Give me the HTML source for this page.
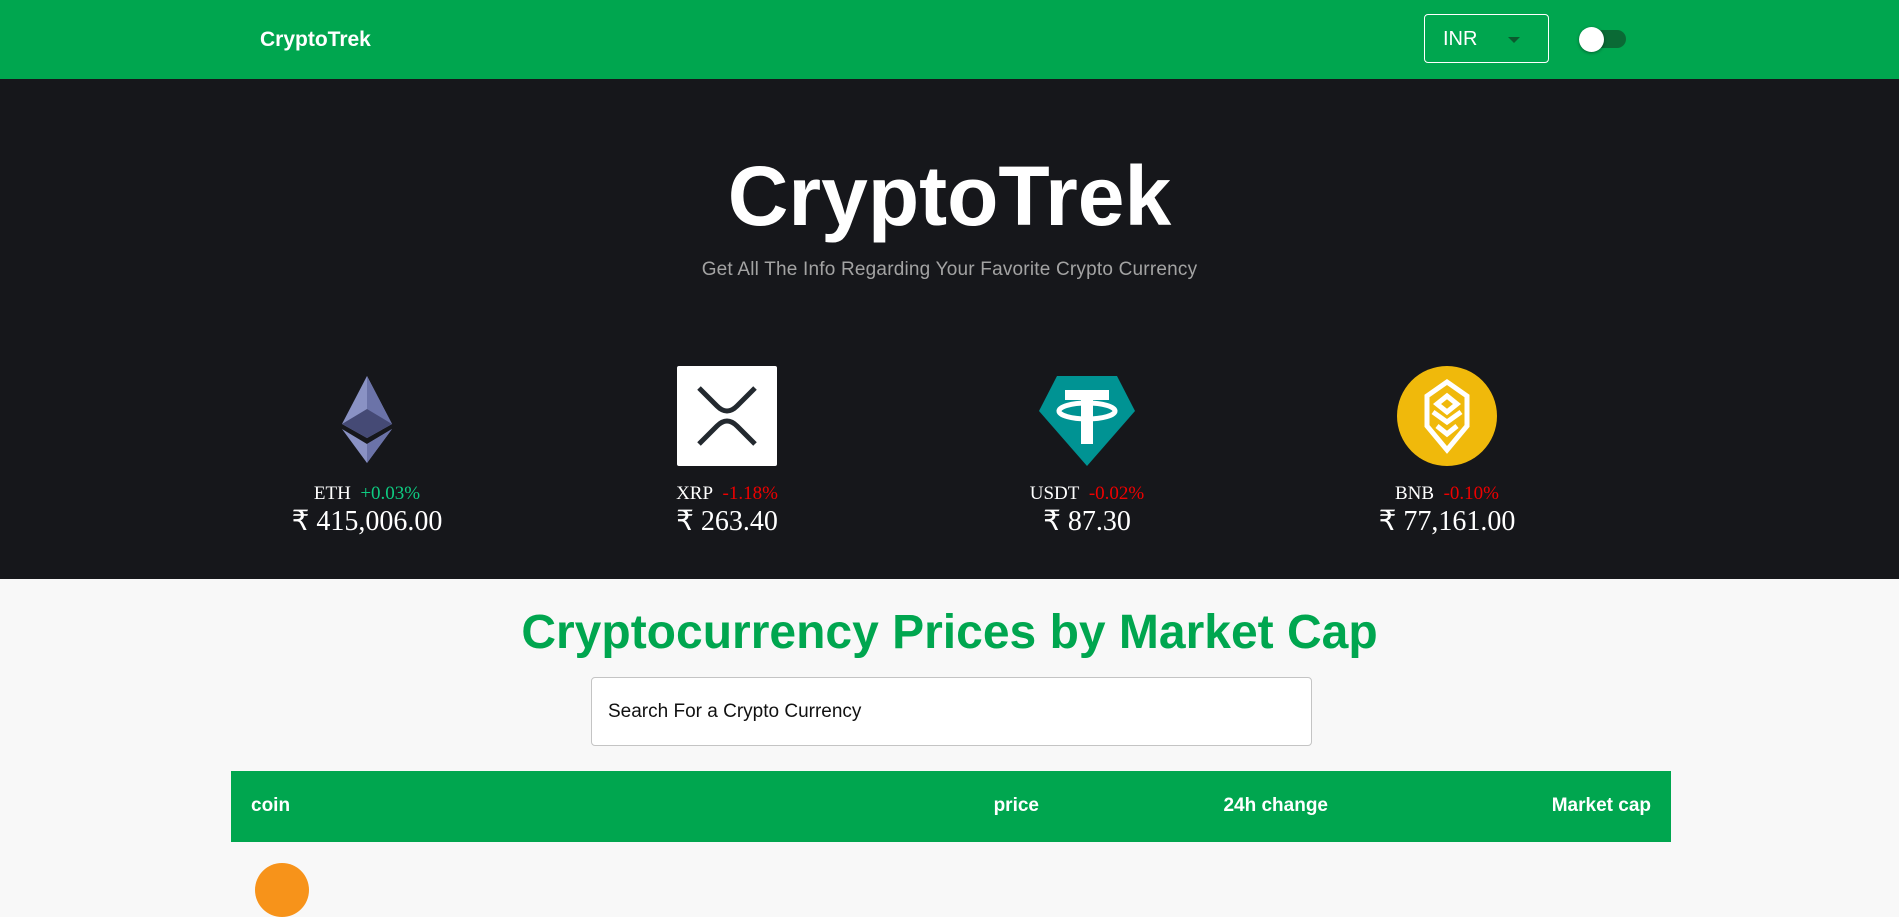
<!DOCTYPE html>
<html><head><meta charset="utf-8"><style>
*{margin:0;padding:0;box-sizing:border-box}
body{width:1899px;height:867px;overflow:hidden;background:#f8f8f8;font-family:"Liberation Sans",sans-serif;position:relative}
.hdr{position:absolute;left:0;top:0;width:1899px;height:79px;background:#00a64f}
.logo{position:absolute;left:260px;top:28px;color:#fff;font-weight:bold;font-size:21px;letter-spacing:0px}
.sel{position:absolute;left:1424px;top:14px;width:125px;height:49px;border:1px solid #fff;border-radius:4px;color:#fff;font-size:20px;padding:13px 0 0 18px}
.sel:after{content:"";position:absolute;right:28px;top:22px;border-left:6px solid transparent;border-right:6px solid transparent;border-top:6px solid #0b5a2e}
.trk{position:absolute;left:1579px;top:30px;width:47px;height:18px;border-radius:9px;background:#0a6a35}
.knob{position:absolute;left:1579px;top:27px;width:25px;height:25px;border-radius:50%;background:#fff;box-shadow:0 1px 3px rgba(0,0,0,.4)}
.dark{position:absolute;left:0;top:79px;width:1899px;height:500px;background:#16171b}
.title{position:absolute;left:0;width:1899px;top:148px;text-align:center;color:#fff;font-weight:bold;font-size:84px;letter-spacing:0px}
.sub{position:absolute;left:0;width:1899px;top:259px;text-align:center;color:#a3a3a3;font-size:19px;letter-spacing:0.2px}
.coin{position:absolute;top:366px;width:300px;text-align:center;color:#fff;font-family:"Liberation Serif",serif}
.ic{width:100px;height:100px;margin:0 auto;display:block}
.sym{margin-top:17px;font-size:19px}
.g{color:#0ecb81}.r{color:#e00}
.pr{font-size:28px;margin-top:-1px}
.h2{position:absolute;left:0;width:1899px;top:605px;text-align:center;color:#00a64f;font-weight:bold;font-size:48px}
.srch{position:absolute;left:591px;top:677px;width:721px;height:69px;border:1px solid #c4c4c4;border-radius:4px;background:#fff;font-size:19px;padding:23px 0 0 16px;color:#111}
.th{position:absolute;left:231px;top:771px;width:1440px;height:71px;background:#00a64f;color:#fff;font-weight:bold;font-size:19px}
.th span{position:absolute;top:24px}
.btc{position:absolute;left:255px;top:863px;width:54px;height:54px;border-radius:50%;background:#f7931a}
</style></head><body>
<div class="hdr"><div class="logo">CryptoTrek</div><div class="sel">INR</div><div class="trk"></div><div class="knob"></div></div>
<div class="dark"></div>
<div class="title">CryptoTrek</div>
<div class="sub">Get All The Info Regarding Your Favorite Crypto Currency</div>

<div class="coin" style="left:217px"><svg class="ic" viewBox="0 0 100 100"><polygon points="50,10 25,58 50,72 75,58" fill="#8a92c4"/><polygon points="50,10 50,72 75,58" fill="#6b73a8"/><polygon points="25,58 50,43 75,58 50,72" fill="#454a75"/><polygon points="25,63 50,78 75,63 50,97" fill="#8a92c4"/><polygon points="50,78 75,63 50,97" fill="#6b73a8"/></svg>
<div class="sym">ETH&nbsp; <span class="g">+0.03%</span></div><div class="pr">₹ 415,006.00</div></div>

<div class="coin" style="left:577px"><svg class="ic" viewBox="0 0 100 100"><rect width="100" height="100" rx="2" fill="#fff"/><path d="M22 22 L40 40 Q50 50 60 40 L78 22 M22 78 L40 60 Q50 50 60 60 L78 78" stroke="#23292f" stroke-width="5" fill="none"/></svg>
<div class="sym">XRP&nbsp; <span class="r">-1.18%</span></div><div class="pr">₹ 263.40</div></div>

<div class="coin" style="left:937px"><svg class="ic" viewBox="0 0 100 100"><polygon points="20,10 80,10 98,45 50,100 2,45" fill="#009393"/><rect x="28" y="24" width="44" height="10" fill="#fff"/><rect x="44" y="24" width="12" height="54" fill="#fff"/><ellipse cx="50" cy="45" rx="28" ry="8" fill="none" stroke="#fff" stroke-width="5"/></svg>
<div class="sym">USDT&nbsp; <span class="r">-0.02%</span></div><div class="pr">₹ 87.30</div></div>

<div class="coin" style="left:1297px"><svg class="ic" viewBox="0 0 100 100"><circle cx="50" cy="50" r="50" fill="#f0b90b"/><path d="M50 16 L70 30 L70 60 L50 84 L30 60 L30 30 Z M50 30 L60 38 L50 46 L40 38 Z M36 46 L50 56 L64 46 M40 60 L50 68 L60 60" stroke="#fff" stroke-width="5" fill="none"/></svg>
<div class="sym">BNB&nbsp; <span class="r">-0.10%</span></div><div class="pr">₹ 77,161.00</div></div>

<div class="h2">Cryptocurrency Prices by Market Cap</div>
<div class="srch">Search For a Crypto Currency</div>
<div class="th"><span style="left:20px">coin</span><span style="right:632px">price</span><span style="right:343px">24h change</span><span style="right:20px">Market cap</span></div>
<div class="btc"></div>
</body></html>
